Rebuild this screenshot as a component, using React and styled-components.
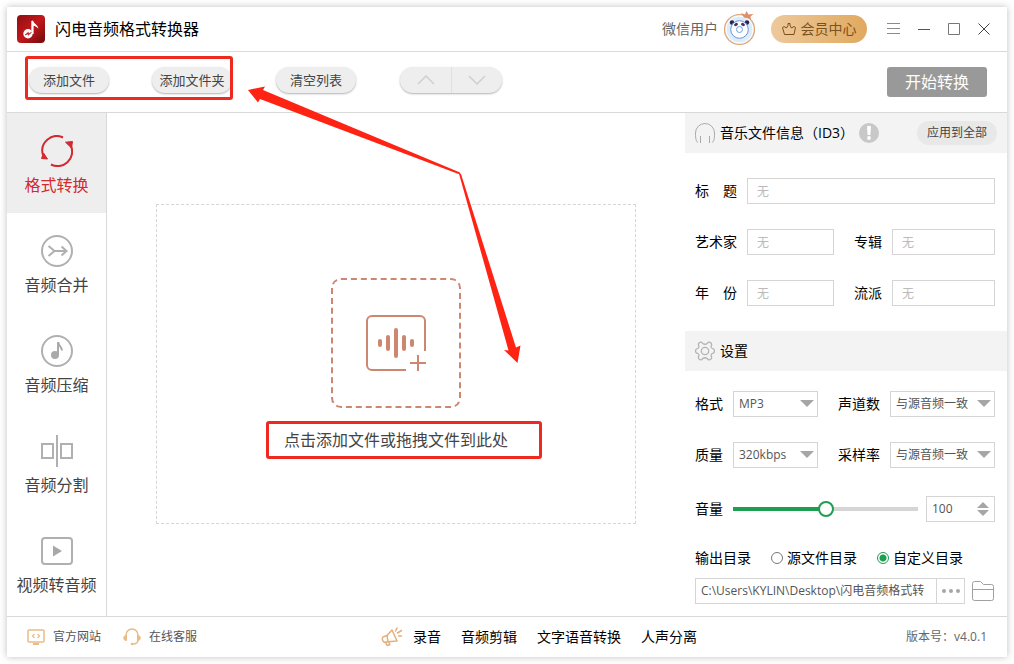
import React, { useState } from "react";
import styled, { createGlobalStyle } from "styled-components";

const tools = [
  { id: "convert", label: "格式转换", Icon: ConvertIcon },
  { id: "merge", label: "音频合并", Icon: MergeIcon },
  { id: "compress", label: "音频压缩", Icon: NoteIcon },
  { id: "split", label: "音频分割", Icon: SplitIcon },
  { id: "video", label: "视频转音频", Icon: VideoIcon },
];

const links = ["录音", "音频剪辑", "文字语音转换", "人声分离"];

function App() {
  const [active, setActive] = useState("convert");
  const [volume, setVolume] = useState(100);
  const [output, setOutput] = useState("custom");

  const changeVolume = (value) => {
    setVolume(Math.min(200, Math.max(0, Number(value))));
  };

  return (
    <>
      <GlobalStyle />
      <Shell>
        <TitleBar>
          <LogoIcon />
          <AppName>闪电音频格式转换器</AppName>
          <UserName>微信用户</UserName>
          <AvatarIcon />
          <VipButton type="button">
            <CrownIcon />
            会员中心
          </VipButton>
          <WindowButtons>
            <WindowButton type="button" aria-label="菜单">
              <svg width="14" height="14" stroke="#8a8a8a">
                <path d="M0 1.5h13M0 6.5h13M0 11.5h13" />
              </svg>
            </WindowButton>
            <WindowButton type="button" aria-label="最小化">
              <svg width="14" height="14" stroke="#555">
                <path d="M1 7.5h12" />
              </svg>
            </WindowButton>
            <WindowButton type="button" aria-label="最大化">
              <svg width="14" height="14" stroke="#777" fill="none">
                <path d="M1.5 1.5h11v11h-11z" />
              </svg>
            </WindowButton>
            <WindowButton type="button" aria-label="关闭">
              <svg width="14" height="14" stroke="#444">
                <path d="M1.5 1.5l11 11M12.5 1.5l-11 11" />
              </svg>
            </WindowButton>
          </WindowButtons>
        </TitleBar>

        <Toolbar>
          <AddGroup>
            <PillButton type="button">添加文件</PillButton>
            <PillButton type="button">添加文件夹</PillButton>
          </AddGroup>
          <PillButton type="button">清空列表</PillButton>
          <MoveGroup>
            <MoveButton type="button" aria-label="上移">
              <svg width="18" height="10" fill="none" stroke="#cfcfcf" strokeWidth="1.5">
                <path d="M1 9l8-8 8 8" />
              </svg>
            </MoveButton>
            <MoveButton type="button" aria-label="下移">
              <svg width="18" height="10" fill="none" stroke="#cfcfcf" strokeWidth="1.5">
                <path d="M1 1l8 8 8-8" />
              </svg>
            </MoveButton>
          </MoveGroup>
          <StartButton type="button">开始转换</StartButton>
        </Toolbar>

        <Main>
          <Sidebar>
            {tools.map(({ id, label, Icon }) => (
              <ToolButton
                key={id}
                type="button"
                $active={id === active}
                onClick={() => setActive(id)}
              >
                <Icon />
                {label}
              </ToolButton>
            ))}
          </Sidebar>

          <Content>
            <DropArea>
              <DropButton type="button" aria-label="添加文件">
                <AddAudioIcon />
              </DropButton>
              <DropHint>点击添加文件或拖拽文件到此处</DropHint>
            </DropArea>
          </Content>

          <Panel>
            <PanelHeader>
              <HeadphoneIcon />
              <PanelTitle>音乐文件信息（ID3）</PanelTitle>
              <AlertIcon />
              <ApplyButton type="button">应用到全部</ApplyButton>
            </PanelHeader>
            <InfoForm>
              <Row>
                <Field>
                  <Label htmlFor="title" $width={42}>标题</Label>
                  <TextInput id="title" placeholder="无" />
                </Field>
              </Row>
              <Row>
                <Field $width={139}>
                  <Label htmlFor="artist" $width={42}>艺术家</Label>
                  <TextInput id="artist" placeholder="无" />
                </Field>
                <Field>
                  <Label htmlFor="album">专辑</Label>
                  <TextInput id="album" placeholder="无" />
                </Field>
              </Row>
              <Row>
                <Field $width={139}>
                  <Label htmlFor="year" $width={42}>年份</Label>
                  <TextInput id="year" placeholder="无" />
                </Field>
                <Field>
                  <Label htmlFor="genre">流派</Label>
                  <TextInput id="genre" placeholder="无" />
                </Field>
              </Row>
            </InfoForm>

            <PanelHeader>
              <GearIcon />
              <PanelTitle>设置</PanelTitle>
            </PanelHeader>
            <SettingsForm>
              <Rows>
                <Row>
                  <Field $width={123}>
                    <Label htmlFor="format">格式</Label>
                    <Dropdown id="format" options={["MP3", "WAV", "FLAC"]} />
                  </Field>
                  <Field>
                    <Label htmlFor="channels">声道数</Label>
                    <Dropdown id="channels" options={["与源音频一致"]} />
                  </Field>
                </Row>
                <Row>
                  <Field $width={123}>
                    <Label htmlFor="quality">质量</Label>
                    <Dropdown id="quality" options={["320kbps", "192kbps"]} />
                  </Field>
                  <Field>
                    <Label htmlFor="rate">采样率</Label>
                    <Dropdown id="rate" options={["与源音频一致"]} />
                  </Field>
                </Row>
              </Rows>

              <VolumeRow>
                <Field>
                  <Label htmlFor="volume">音量</Label>
                  <Slider
                    id="volume"
                    type="range"
                    min="0"
                    max="200"
                    value={volume}
                    style={{ "--fill": volume / 2 + "%" }}
                    onChange={(e) => changeVolume(e.target.value)}
                  />
                </Field>
                <NumberBox>
                  <input
                    type="number"
                    aria-label="音量数值"
                    value={volume}
                    onChange={(e) => changeVolume(e.target.value)}
                  />
                  <Steppers>
                    <button type="button" aria-label="增大" onClick={() => changeVolume(volume + 1)}>
                      <svg width="12" height="6" fill="#a6a6a6"><path d="M0 6l6-6 6 6z" /></svg>
                    </button>
                    <button type="button" aria-label="减小" onClick={() => changeVolume(volume - 1)}>
                      <svg width="12" height="6" fill="#a6a6a6"><path d="M0 0l6 6 6-6z" /></svg>
                    </button>
                  </Steppers>
                </NumberBox>
              </VolumeRow>

              <OutputGroup>
                <OutputRow>
                  <span>输出目录</span>
                  <RadioLabel>
                    <Radio
                      type="radio"
                      name="output"
                      checked={output === "source"}
                      onChange={() => setOutput("source")}
                    />
                    源文件目录
                  </RadioLabel>
                  <RadioLabel>
                    <Radio
                      type="radio"
                      name="output"
                      checked={output === "custom"}
                      onChange={() => setOutput("custom")}
                    />
                    自定义目录
                  </RadioLabel>
                </OutputRow>
                <PathRow>
                  <PathBox>
                    <input
                      aria-label="输出路径"
                      defaultValue="C:\Users\KYLIN\Desktop\闪电音频格式转"
                    />
                    <MoreButton type="button" aria-label="选择目录">
                      <svg width="18" height="4" fill="#a6a6a6">
                        <circle cx="2" cy="2" r="2" />
                        <circle cx="9" cy="2" r="2" />
                        <circle cx="16" cy="2" r="2" />
                      </svg>
                    </MoreButton>
                  </PathBox>
                  <IconButton type="button" aria-label="打开目录">
                    <FolderIcon />
                  </IconButton>
                </PathRow>
              </OutputGroup>
            </SettingsForm>
          </Panel>
        </Main>

        <Footer>
          <SmallLink href="#site">
            <MonitorIcon />
            官方网站
          </SmallLink>
          <SmallLink href="#support">
            <HeadsetIcon />
            在线客服
          </SmallLink>
          <FooterLinks>
            <MegaphoneIcon />
            {links.map((link) => (
              <a href="#more" key={link}>{link}</a>
            ))}
          </FooterLinks>
          <Version>版本号：v4.0.1</Version>
        </Footer>

        <Arrows viewBox="0 0 280 280" fill="#ff2314" aria-hidden="true">
          <path d="M7 8L24 4.500L22 8L219 90.500L217.500 92L19 17L17 20.500Z" />
          <path d="M217.500 90L220 92L275 265.500L279.500 263.500L276.500 281L263 268L267.500 268.500L245 188Z" />
        </Arrows>
      </Shell>
    </>
  );
}

function Dropdown({ id, options }) {
  return (
    <SelectBox>
      <select id={id}>
        {options.map((option) => (
          <option key={option}>{option}</option>
        ))}
      </select>
      <svg width="14" height="7" fill="#a6a6a6"><path d="M0 0h14l-7 7z" /></svg>
    </SelectBox>
  );
}

function LogoIcon() {
  return (
    <svg width="28" height="28" viewBox="0 0 28 28">
      <defs>
        <linearGradient id="logo" x1="0" y1="0" x2="1" y2="1">
          <stop offset="0" stopColor="#8d0f12" />
          <stop offset="0.5" stopColor="#c3171b" />
          <stop offset="1" stopColor="#6d0a0c" />
        </linearGradient>
      </defs>
      <rect width="28" height="28" rx="4" fill="url(#logo)" />
      <path d="M14.300 6l1.700-.500c.600 3 5 4.300 5.500 8.300-1.700-2-3.300-2.600-4.900-3V19h-2.300z" fill="#fff" />
      <circle cx="11" cy="18.700" r="4.700" fill="#fff" />
      <path d="M8 20l3.300-2.700.5 1.500 2.700-1.500-3.200 3-.700-1.500z" fill="#b81519" stroke="#b81519" strokeWidth=".6" />
    </svg>
  );
}

function AvatarIcon() {
  return (
    <svg width="34" height="36" viewBox="0 0 34 36">
      <circle cx="16.500" cy="18.500" r="15" fill="#dcecfa" stroke="#e0a470" strokeWidth="1.200" />
      <circle cx="16.500" cy="18.500" r="13.500" fill="none" stroke="#fff" />
      <circle cx="9" cy="11.500" r="2.200" fill="#2d2146" />
      <circle cx="24" cy="11.500" r="2.200" fill="#2d2146" />
      <circle cx="16.500" cy="18.500" r="8.800" fill="#fff" stroke="#6f93cf" />
      <ellipse cx="13" cy="13.500" rx="2" ry="1.500" fill="#4a2f5e" transform="rotate(-25 13 13.500)" />
      <ellipse cx="20" cy="13.500" rx="2" ry="1.500" fill="#4a2f5e" transform="rotate(25 20 13.500)" />
      <circle cx="16.500" cy="18.500" r="3" fill="#fff" stroke="#6f9fe0" />
      <path d="M18 2l4 1.500L23.500 0l2 3.500 5-.500-3 2.500.500 2.500-7-1.500z" fill="#de8f6a" />
    </svg>
  );
}

function CrownIcon() {
  return (
    <svg width="14" height="14" viewBox="0 0 14 14" fill="none" stroke="#7a4f1c" strokeLinejoin="round">
      <path d="M.500 5.500L2 4.500 4.500 6 6 3.500V1.500h2v2L9.500 6 12 4.500l1.500 1L12 12.500H2.500z" />
    </svg>
  );
}

function ConvertIcon() {
  return (
    <svg width="32" height="32" viewBox="0 0 32 32" fill="none" stroke="#d3292f" strokeWidth="2">
      <path d="M22 2.500A14.500 14.500 0 0 0 2 20" />
      <path d="M10 29.500A14.500 14.500 0 0 0 30 11" />
      <path d="M24.500 7.200l7-.700-1 6.500zM.500 23.500l2-5.500 4 6z" fill="#d3292f" strokeWidth="1" />
    </svg>
  );
}

function MergeIcon() {
  return (
    <svg width="32" height="32" viewBox="0 0 32 32" fill="none" stroke="#b0b0b0" strokeWidth="2">
      <circle cx="16" cy="16" r="15" />
      <path d="M7.500 11l6 5-6 5M13.500 16h12M20.500 11.500l5 4.500-5 4.500" />
    </svg>
  );
}

function NoteIcon() {
  return (
    <svg width="32" height="32" viewBox="0 0 32 32">
      <circle cx="16" cy="16" r="15" fill="none" stroke="#b0b0b0" strokeWidth="2" />
      <circle cx="14" cy="20" r="4" fill="#aaa" />
      <path d="M17 20V8h.500c.3 3 3.500 4 3.500 7.500" fill="none" stroke="#aaa" strokeWidth="2" />
    </svg>
  );
}

function SplitIcon() {
  return (
    <svg width="32" height="32" viewBox="0 0 32 32" fill="none" stroke="#b0b0b0" strokeWidth="2">
      <path d="M1 9h11v14H1zM20 9h11v14H20zM16 0v32" />
    </svg>
  );
}

function VideoIcon() {
  return (
    <svg width="32" height="32" viewBox="0 0 32 32">
      <rect x="1" y="3" width="30" height="26" rx="3" fill="none" stroke="#b0b0b0" strokeWidth="2" />
      <path d="M12 10.500v11l9-5.500z" fill="#a8a8a8" />
    </svg>
  );
}

function AddAudioIcon() {
  return (
    <svg width="60" height="56" viewBox="0 0 60 56" fill="none" stroke="#cd8670" strokeWidth="2">
      <path d="M40 55H6a5 5 0 0 1-5-5V6a5 5 0 0 1 5-5h48a5 5 0 0 1 5 5v30" />
      <path d="M44 48h16M52 40v16" />
      <path d="M14 26v4M46 26v4M22 22v12M38 22v12M30 15v26" strokeWidth="4" strokeLinecap="round" />
    </svg>
  );
}

function HeadphoneIcon() {
  return (
    <svg width="20" height="20" viewBox="0 0 20 20" fill="none" stroke="#aaa">
      <path d="M2.500 19.500C.500 17 .500 14 .500 10a9.500 9.500 0 0 1 19 0c0 4 0 7-2 9.500M5.500 13v7M14.500 13v7" />
    </svg>
  );
}

function AlertIcon() {
  return (
    <svg width="20" height="20" viewBox="0 0 20 20">
      <circle cx="10" cy="10" r="10" fill="#c8c8c8" />
      <path d="M8 3.500q2-1.500 4 0l-.600 8.500H8.600z" fill="#fff" />
      <circle cx="10" cy="15" r="1.900" fill="#fff" />
    </svg>
  );
}

function GearIcon() {
  return (
    <svg width="20" height="20" viewBox="0 0 20 20" fill="none" stroke="#b4b4b4" strokeWidth="1.300" strokeLinejoin="round">
      <path d="M7.500 2.200Q10 4.400 12.500 2.200Q13.800.200 16 2Q17.200 3.300 16.200 4.800Q15.600 7.200 18.300 7.800Q19.500 8.500 19.400 10Q19.500 11.500 18.300 12.200Q15.600 12.800 16.200 15.200Q17.200 16.700 16 18Q13.800 19.800 12.500 17.800Q10 15.600 7.500 17.800Q6.200 19.800 4 18Q2.800 16.700 3.800 15.200Q4.400 12.800 1.700 12.200Q.500 11.500.600 10Q.500 8.500 1.700 7.800Q4.400 7.200 3.800 4.800Q2.800 3.300 4 2Q6.200.200 7.500 2.200Z" />
      <circle cx="10" cy="10" r="3.700" />
    </svg>
  );
}

function FolderIcon() {
  return (
    <svg width="22" height="20" viewBox="0 0 22 20" fill="none" stroke="#a0a0a0">
      <path d="M.500 17.500v-15a2 2 0 0 1 2-2h6l3 3h8a2 2 0 0 1 2 2v12a2 2 0 0 1-2 2h-17a2 2 0 0 1-2-2zM.500 8.500h21" />
    </svg>
  );
}

function MonitorIcon() {
  return (
    <svg width="18" height="16" viewBox="0 0 18 16" fill="none" stroke="#e9bd84" strokeWidth="1.500">
      <rect x="1" y="1" width="16" height="12" rx="1" />
      <path d="M7.500 5l-2 2 2 2M10.500 5l2 2-2 2" strokeWidth="1.200" />
      <path d="M6 15h6" strokeWidth="2" />
    </svg>
  );
}

function HeadsetIcon() {
  return (
    <svg width="18" height="18" viewBox="0 0 18 18" fill="none" stroke="#e9bd84" strokeWidth="1.500">
      <path d="M3 8V7a6 6 0 0 1 12 0v1M15 12c0 3-3 4-5.500 4" />
      <path d="M3.500 7.500v5C1.500 12.500.800 11.500.800 10s.700-2.500 2.700-2.500zM14.500 7.500v5c2 0 2.700-1 2.700-2.500s-.700-2.500-2.700-2.500z" fill="#e9bd84" strokeWidth="1" />
      <circle cx="9" cy="16" r="1.300" fill="#e9bd84" stroke="none" />
    </svg>
  );
}

function MegaphoneIcon() {
  return (
    <svg width="22" height="20" viewBox="0 0 22 20" fill="none" stroke="#e5ae7c" strokeWidth="1.500" strokeLinejoin="round" strokeLinecap="round">
      <path d="M6 8.500l5-5.500 5 11-9 .700z" />
      <path d="M6 8.500l-3.500 1.200c-2 1-1.200 5 1 5.500l3.500-.500M4.500 15.300l1.700 3.200 2.500-.800L8 14.800M14.500 4l1.500-3M16.500 6l4-2.500M17.500 9h3" />
    </svg>
  );
}

const GlobalStyle = createGlobalStyle`
  * {
    box-sizing: border-box;
  }

  body {
    margin: 0;
    background: #fff;
    color: #000;
    font-family: "Open Sans", "Noto Sans CJK SC", sans-serif;
    font-size: 14px;
    font-weight: 400;
    line-height: 20px;
  }

  button, input, select {
    margin: 0;
    padding: 0;
    border: 0;
    background: none;
    color: inherit;
    font: inherit;
    outline: none;
  }

  svg {
    display: block;
    flex: none;
  }

  a {
    color: inherit;
    text-decoration: none;
  }
`;

const Shell = styled.div`
  position: relative;
  display: flex;
  flex-direction: column;
  min-height: calc(100vh - 14px);
  margin: 7px;
  background: #fff;
  box-shadow: 0 0 7px rgba(0, 0, 0, 0.25);
`;

const TitleBar = styled.header`
  display: flex;
  align-items: center;
  height: 45px;
  padding: 0 16px 0 10px;
  border-bottom: 1px solid #d9d9d9;
`;

const AppName = styled.h1`
  margin: 0 auto 0 10px;
  font-size: 16px;
  font-weight: inherit;
`;

const UserName = styled.span`
  margin-right: 5px;
  color: #666;
`;

const VipButton = styled.button`
  display: flex;
  align-items: center;
  justify-content: center;
  gap: 5px;
  width: 96px;
  height: 28px;
  margin: 0 20px 0 14px;
  border-radius: 14px;
  background: linear-gradient(90deg, #eec99c, #e0a95f);
  color: #7a5220;
`;

const WindowButtons = styled.div`
  display: flex;
  gap: 16px;
`;

const WindowButton = styled.button`
  width: 14px;
  height: 14px;
`;

const Toolbar = styled.div`
  display: flex;
  align-items: flex-start;
  gap: 44px;
  height: 61px;
  padding: 15px 20px 0 22px;
  border-bottom: 1px solid #d9d9d9;
`;

const AddGroup = styled.div`
  position: relative;
  display: flex;
  gap: 43px;

  &::after {
    content: "";
    position: absolute;
    inset: -11px -1px -7px -4px;
    border: 3px solid #ee2a20;
    border-radius: 3px;
    pointer-events: none;
  }
`;

const PillButton = styled.button`
  width: 80px;
  height: 26px;
  border-radius: 13px;
  background: #eee;
  box-shadow: 0 1px 2px rgba(0, 0, 0, 0.3);
  color: #444;
  font-size: 13px;
  white-space: nowrap;
`;

const MoveGroup = styled.div`
  display: flex;
  height: 26px;
  border-radius: 13px;
  background: #eee;
  box-shadow: 0 1px 2px rgba(0, 0, 0, 0.3);
`;

const MoveButton = styled.button`
  display: flex;
  align-items: center;
  justify-content: center;
  width: 51px;

  & + & {
    border-left: 1px solid #e0e0e0;
  }
`;

const StartButton = styled.button`
  width: 100px;
  height: 30px;
  margin-left: auto;
  border-radius: 3px;
  background: #999;
  color: #fff;
  font-size: 16px;
`;

const Main = styled.main`
  display: flex;
  flex: 1;
`;

const Sidebar = styled.nav`
  flex: none;
  width: 100px;
  border-right: 1px solid #d9d9d9;
`;

const ToolButton = styled.button`
  display: flex;
  flex-direction: column;
  align-items: center;
  gap: 8px;
  width: 100%;
  height: 100px;
  padding-top: 22px;
  background: ${(props) => (props.$active ? "#eee" : "transparent")};
  color: ${(props) => (props.$active ? "#d3292f" : "#444")};
  font-size: 16px;
`;

const Content = styled.section`
  display: flex;
  flex: 1;
  align-items: center;
  justify-content: center;
  padding-bottom: 2px;
`;

const DropArea = styled.div`
  display: flex;
  flex-direction: column;
  align-items: center;
  justify-content: center;
  gap: 22px;
  width: 83%;
  height: 320px;
  border: 1px dashed #d5d5d5;
`;

const DropButton = styled.button`
  display: flex;
  align-items: center;
  justify-content: center;
  width: 130px;
  height: 130px;
  border: 2px dashed #cd8670;
  border-radius: 10px;
`;

const DropHint = styled.p`
  position: relative;
  margin: 0;
  color: #444;
  font-size: 16px;

  &::after {
    content: "";
    position: absolute;
    inset: -9px -34px -9px -18px;
    border: 3px solid #ee2a20;
    border-radius: 3px;
    pointer-events: none;
  }
`;

const Panel = styled.aside`
  flex: none;
  width: 322px;
`;

const PanelHeader = styled.div`
  display: flex;
  align-items: center;
  gap: 5px;
  height: 40px;
  padding: 0 10px;
  background: #f3f3f3;
`;

const PanelTitle = styled.h2`
  margin: 0;
  font-size: 14px;
  font-weight: inherit;
`;

const ApplyButton = styled.button`
  width: 80px;
  height: 24px;
  margin-left: auto;
  border-radius: 12px;
  background: #e8e8e8;
  color: #444;
  font-size: 12px;
`;

const Rows = styled.div`
  display: flex;
  flex-direction: column;
  gap: 25px;
`;

const InfoForm = styled(Rows)`
  padding: 25px 12px 25px 10px;
`;

const SettingsForm = styled(Rows)`
  gap: 28px;
  padding: 20px 12px 12px 10px;
`;

const Row = styled.div`
  display: flex;
  gap: 20px;
`;

const VolumeRow = styled(Row)`
  gap: 8px;
`;

const Field = styled.div`
  display: flex;
  flex: ${(props) => (props.$width ? "none" : 1)};
  align-items: center;
  gap: 10px;
  width: ${(props) => (props.$width ? props.$width + "px" : "auto")};
  min-width: 0;
`;

const Label = styled.label`
  flex: none;
  width: ${(props) => (props.$width ? props.$width + "px" : "auto")};
  text-align-last: justify;
`;

const TextInput = styled.input`
  flex: 1;
  min-width: 0;
  height: 26px;
  padding: 0 9px;
  border: 1px solid #d5d5d5;
  font-size: 12px;

  &::placeholder {
    color: #bbb;
  }
`;

const SelectBox = styled.div`
  position: relative;
  flex: 1;
  min-width: 0;

  select {
    width: 100%;
    height: 26px;
    padding-left: 5px;
    border: 1px solid #d5d5d5;
    appearance: none;
    color: #555;
    font-size: 12px;
  }

  svg {
    position: absolute;
    top: 9px;
    right: 4px;
    pointer-events: none;
  }
`;

const Slider = styled.input`
  flex: 1;
  min-width: 0;
  height: 16px;
  appearance: none;

  &::-webkit-slider-runnable-track {
    height: 4px;
    background: linear-gradient(90deg, #1e9e50 var(--fill), #d5d5d5 var(--fill));
  }

  &::-webkit-slider-thumb {
    width: 16px;
    height: 16px;
    margin-top: -6px;
    border: 2px solid #1e9e50;
    border-radius: 50%;
    appearance: none;
    background: #fff;
  }
`;

const NumberBox = styled.div`
  display: flex;
  align-items: center;
  width: 69px;
  height: 26px;
  padding: 0 5px;
  border: 1px solid #d5d5d5;

  input {
    flex: 1;
    min-width: 0;
    appearance: textfield;
    color: #555;
    font-size: 12px;
  }

  input::-webkit-inner-spin-button {
    appearance: none;
  }
`;

const Steppers = styled.div`
  display: flex;
  flex-direction: column;
  gap: 2px;
`;

const OutputGroup = styled.div`
  display: flex;
  flex-direction: column;
  gap: 12px;
`;

const OutputRow = styled.div`
  display: flex;
  align-items: center;
  gap: 20px;
  line-height: 16px;
`;

const RadioLabel = styled.label`
  display: flex;
  align-items: center;
  gap: 4px;
`;

const Radio = styled.input`
  width: 12px;
  height: 12px;
  border: 1px solid #777;
  border-radius: 50%;
  appearance: none;

  &:checked {
    border-color: #1e9e50;
    background: radial-gradient(#1e9e50 3px, #fff 4px);
  }
`;

const PathRow = styled.div`
  display: flex;
  align-items: center;
  gap: 7px;
`;

const PathBox = styled.div`
  display: flex;
  flex: 1;
  height: 26px;
  border: 1px solid #d5d5d5;

  input {
    flex: 1;
    min-width: 0;
    margin: 0 5px;
    color: #555;
    font-size: 12px;
  }
`;

const MoreButton = styled.button`
  display: flex;
  align-items: center;
  justify-content: center;
  width: 28px;
  border-left: 1px solid #d5d5d5;
`;

const IconButton = styled.button`
  width: 23px;
  height: 20px;
`;

const Footer = styled.footer`
  display: flex;
  align-items: center;
  gap: 22px;
  height: 41px;
  padding: 0 20px;
  border-top: 1px solid #d9d9d9;
`;

const SmallLink = styled.a`
  display: flex;
  align-items: center;
  gap: 8px;
  color: #555;
  font-size: 12px;
`;

const FooterLinks = styled.div`
  display: flex;
  align-items: center;
  gap: 20px;
  margin-left: 162px;

  svg {
    margin-right: -10px;
  }
`;

const Version = styled.span`
  margin-left: auto;
  color: #666;
  font-size: 12px;
`;

const Arrows = styled.svg`
  position: absolute;
  top: 75px;
  left: 234px;
  width: 280px;
  height: 280px;
  overflow: visible;
  pointer-events: none;
`;

export default App;
